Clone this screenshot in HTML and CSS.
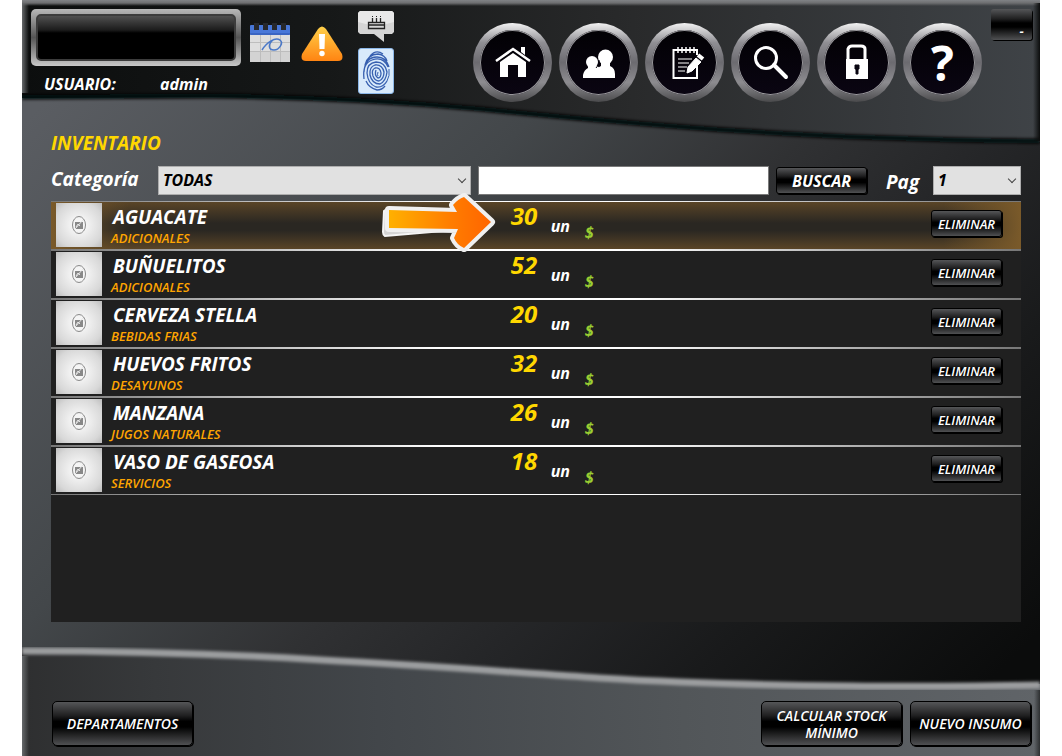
FILE: index.html
```html
<!DOCTYPE html>
<html lang="es">
<head>
  <meta charset="UTF-8">
  <meta name="viewport" content="width=device-width, initial-scale=1.0">
  <title>Inventario</title>
  <link rel="stylesheet" href="styles.css">
</head>
<body>

  <div class="app">
    <!-- Fondo con curvas -->
    <svg class="backdrop" viewBox="0 0 1018 756" preserveAspectRatio="none" aria-hidden="true">
      <defs>
        <linearGradient id="bgMid" gradientUnits="userSpaceOnUse" x1="0" y1="125" x2="762" y2="887">
          <stop offset="0" stop-color="#5a5d62"/>
          <stop offset=".33" stop-color="#43474a"/>
          <stop offset=".52" stop-color="#303133"/>
          <stop offset=".65" stop-color="#252628"/>
          <stop offset=".8" stop-color="#191a1b"/>
          <stop offset="1" stop-color="#0b0c0c"/>
        </linearGradient>
        <linearGradient id="bgTop" x1="0" y1="0" x2="1" y2="0">
          <stop offset="0" stop-color="#0c0e0e"/>
          <stop offset=".3" stop-color="#161818"/>
          <stop offset=".6" stop-color="#292a2b"/>
          <stop offset="1" stop-color="#3f4347"/>
        </linearGradient>
        <linearGradient id="bgBottom" x1="0" y1="0" x2="1" y2="0">
          <stop offset="0" stop-color="#2e2f30"/>
          <stop offset=".13" stop-color="#37393b"/>
          <stop offset=".35" stop-color="#42464a"/>
          <stop offset=".65" stop-color="#525659"/>
          <stop offset="1" stop-color="#606468"/>
        </linearGradient>
        <linearGradient id="edge" x1="0" y1="0" x2="0" y2="1">
          <stop offset="0" stop-color="#818386"/>
          <stop offset=".5" stop-color="#6d6e70"/>
          <stop offset="1" stop-color="#6d6e70" stop-opacity="0"/>
        </linearGradient>
        <linearGradient id="side" x1="0" y1="0" x2="1" y2="0">
          <stop offset="0" stop-color="#66696b"/>
          <stop offset="1" stop-color="#66696b" stop-opacity="0"/>
        </linearGradient>
        <linearGradient id="sideDark" x1="0" y1="0" x2="1" y2="0">
          <stop offset="0" stop-color="#0b0c0c" stop-opacity="0"/>
          <stop offset="1" stop-color="#0b0c0c"/>
        </linearGradient>
        <filter id="soft"><feGaussianBlur stdDeviation="1.4"/></filter>
      </defs>
      <rect width="1018" height="756" fill="url(#bgMid)"/>
      <path d="M0 0H1018V142C900 141 810 138 720 132C640 127 550 119 458 110C370 102 290 98 190 97C100 97 50 98 0 98Z" fill="url(#bgTop)"/>
      <path d="M0 97C50 97 100 96 190 96C290 97 370 101 458 109C550 118 640 126 720 131C810 137 900 140 1018 141" fill="none" stroke="#060707" stroke-width="5" filter="url(#soft)"/>
      <rect width="1018" height="6" fill="url(#edge)"/>
      <rect y="3" width="7" height="90" fill="url(#side)"/>
      <rect x="1011" y="3" width="7" height="138" fill="url(#sideDark)"/>
      <path d="M0 650C120 650 220 653 300 658C400 663 500 671 578 676C660 682 730 684 830 685C900 686 960 685 1018 684V756H0Z" fill="url(#bgBottom)"/>
      <path d="M0 651C120 651 220 655 300 660C400 665 500 673 578 678C660 683 730 685 830 686C900 687 960 686 1018 685" fill="none" stroke="#9b9d9f" stroke-width="7" filter="url(#soft)"/>
      <rect y="656" width="7" height="100" fill="url(#side)"/>
      <rect x="1012" y="690" width="6" height="66" fill="url(#sideDark)" opacity=".6"/>
    </svg>

    <header class="header">
      <div class="brand">
        <div class="logo-frame"><div class="logo-screen"></div></div>
        <p class="user"><span class="user-label">USUARIO:</span><span>admin</span></p>
      </div>

      <div class="shortcuts">
        <button class="icon-button calendar" aria-label="Calendario">
          <svg width="40" height="39" viewBox="0 0 40 39">
            <rect y="11" width="40" height="28" fill="#dedede"/>
            <path d="M0 28H40V39H0Z" fill="#cbcbcb" opacity=".6"/>
            <path d="M0 19.500H40M0 28.500H40M10.500 12V39M20.500 12V39M30.500 12V39" stroke="#bdbdbd"/>
            <rect y="2" width="40" height="10" rx="1" fill="#4877d8"/>
            <path d="M0 11H40" stroke="#2c55ae"/>
            <path d="M4 0h5v7h-5zM13 0h5v7h-5zM22 0h5v7h-5zM31 0h5v7h-5z" fill="#26282c"/>
            <path d="M12 27C17 19 25 14 30 17C34 20 29 27 24 27C18 27 18 21 23 17" fill="none" stroke="#4a78c8" stroke-width="1.500"/>
          </svg>
        </button>
        <button class="icon-button warning" aria-label="Alertas">
          <svg width="42" height="36" viewBox="0 0 42 36">
            <defs>
              <linearGradient id="warn" x1="0" y1="0" x2="0" y2="1">
                <stop offset="0" stop-color="#ffd04a"/><stop offset=".55" stop-color="#ffa62a"/><stop offset="1" stop-color="#ff8412"/>
              </linearGradient>
            </defs>
            <path d="M17 3Q21-2 25 3L41 28Q43 35 37 35H5Q-1 35 1 28Z" fill="url(#warn)"/>
            <path d="M18 8H24L23.500 23H18.500Z" fill="#fff"/><circle cx="21" cy="27.500" r="2.700" fill="#fff"/>
          </svg>
        </button>
        <div class="shortcut-stack">
          <button class="icon-button" aria-label="Cumpleaños">
            <svg width="36" height="31" viewBox="0 0 36 31">
              <path d="M2 0H34L36 2V21L34 23H26V31L16 23H2L0 21V2Z" fill="#d5d5d5"/>
              <path d="M2 0H34L36 2V11Q18 17 0 11V2Z" fill="#e8e8e8"/>
              <path d="M10.500 11.500H26.500V17.500H10.500ZM10 14H27M14.500 7V11M18.500 7V11M22.500 7V11" fill="none" stroke="#222" stroke-width="1.300"/>
              <path d="M14 5h1v1h-1zM18 5h1v1h-1zM22 5h1v1h-1z" fill="#222"/>
            </svg>
          </button>
          <button class="icon-button" aria-label="Huella">
            <svg width="36" height="46" viewBox="0 0 36 46">
              <rect x=".5" y=".5" width="35" height="45" rx="2.500" fill="#d8eafb" stroke="#8cb7e8"/>
              <g fill="none" stroke="#3760b0" stroke-width="1.300">
                <path d="M18 22Q16 27 20 30Q23 30 23 25Q22 19 17 20Q13 22 15 28Q17 33 21 33Q26 31 26 24Q24 16 17 17Q11 19 12 27Q14 36 22 36Q28 33 29 24Q27 14 18 14Q9 15 9 25Q10 36 18 39Q25 40 29 33"/>
                <path d="M6 31Q4 16 14 12Q25 8 30 19M6 24Q7 9 19 9Q28 9 31 19M7 17Q10 6 20 6Q27 7 29 13M8 33Q11 40 19 42Q24 42 27 38M12 8Q18 1 25 6"/>
                <path d="M20 24Q19 27 20 28M31 21Q32 28 29 33" stroke-width="1"/>
              </g>
            </svg>
          </button>
        </div>
      </div>

      <nav class="nav">
        <a class="nav-item" href="#" aria-label="Inicio">
          <svg viewBox="0 0 64 64" fill="#fff">
            <path d="M15 30L32 18L49 30" fill="none" stroke="#fff" stroke-width="2.500"/>
            <path d="M40 16H44V24L40 21ZM19 31L32 22L45 31V46H37V34H27V46H19Z"/>
          </svg>
        </a>
        <a class="nav-item" href="#" aria-label="Clientes">
          <svg viewBox="0 0 64 64" fill="#fff">
            <circle cx="25" cy="31" r="6"/><path d="M16 47V44Q17 39 21 37V34H29L34 38V47Z"/>
            <circle cx="38.500" cy="26" r="7.500"/><path d="M30 47V40Q31 36 34 35V31H43V35Q48 37 48 43V47Z"/>
            <path d="M29 37L32 33V29" fill="none" stroke="#080510" stroke-width="1"/>
          </svg>
        </a>
        <a class="nav-item" href="#" aria-label="Pedidos">
          <svg viewBox="0 0 64 64" fill="none" stroke="#fff">
            <path d="M44 34V47H20.500V19H44V24" stroke-width="2"/>
            <path d="M25 16V22M29 16V22M33 16V22M37 16V22M41 16V22" stroke-width="1.500"/>
            <path d="M25 28H39M25 32H36M25 36H34M25 40H32" stroke-width="1.200"/>
            <path d="M34 42L35 36L43 27L48 31L39 40Z" fill="#fff"/>
            <path d="M45 24L50 28" stroke-width="4"/>
          </svg>
        </a>
        <a class="nav-item" href="#" aria-label="Buscar">
          <svg viewBox="0 0 64 64" fill="none" stroke="#fff">
            <circle cx="27" cy="27" r="10.500" stroke-width="3"/>
            <path d="M35 34L47 46" stroke-width="4" stroke-linecap="round"/>
          </svg>
        </a>
        <a class="nav-item" href="#" aria-label="Seguridad">
          <svg viewBox="0 0 64 64">
            <path d="M23 29V18Q24 15 27 15H36Q40 15 40 18V29" fill="none" stroke="#fff" stroke-width="3"/>
            <path d="M21 28H43V48H21Z" fill="#fff"/>
            <path d="M30 34H34V38H33V43H31V38H30Z" fill="#080510" stroke="#080510"/>
          </svg>
        </a>
        <a class="nav-item nav-help" href="#" aria-label="Ayuda">?</a>
      </nav>

      <button class="button minimize" aria-label="Minimizar">-</button>
    </header>

    <main class="content">
      <h1 class="title">INVENTARIO</h1>

      <form class="filters">
        <label class="category-label" for="categoria">Categoría</label>
        <span class="select-box category-box">
          <select class="select" id="categoria"><option>TODAS</option></select>
        </span>
        <input class="search" type="text" aria-label="Buscar insumo">
        <button class="button search-button" type="button">BUSCAR</button>
        <label class="page-label" for="pagina">Pag</label>
        <span class="select-box page-box">
          <select class="select" id="pagina"><option>1</option></select>
        </span>
      </form>

      <!-- Listado de insumos -->
      <div class="list">
        <table class="items">
          <colgroup>
            <col class="col-thumb"><col class="col-name"><col class="col-qty"><col class="col-unit"><col><col class="col-action">
          </colgroup>
          <tbody>
            <tr class="item selected">
              <td><div class="thumb"><svg width="16" height="20" viewBox="0 0 16 20"><use href="#noImage"/></svg></div></td>
              <td class="name-cell"><div class="name">AGUACATE</div><div class="category">ADICIONALES</div></td>
              <td class="qty">
                30
                <svg class="pointer" width="116" height="60" viewBox="0 0 116 60" aria-hidden="true">
                  <defs>
                    <linearGradient id="arrow" x1="0" y1="0" x2="1" y2="0">
                      <stop offset="0" stop-color="#ffb000"/><stop offset=".6" stop-color="#ff7d00"/><stop offset="1" stop-color="#ff6500"/>
                    </linearGradient>
                  </defs>
                  <path d="M3 19L7 16L75 24L73 38L4 44Q2 43 2 40Z" fill="#d4d4d4" stroke="#f5f5f5" stroke-width="2"/>
                  <path d="M8 18L76 20L72 13Q77 7 83 5L110 30L83 56Q76 53 73 46L77 37L8 36Z" fill="url(#arrow)" stroke="#f0f0f0" stroke-width="8" stroke-linejoin="round"/>
                  <path d="M8 18L76 20L72 13Q77 7 83 5L110 30L83 56Q76 53 73 46L77 37L8 36Z" fill="url(#arrow)"/>
                </svg>
              </td>
              <td class="unit">un</td>
              <td class="price">$</td>
              <td><button class="button delete">ELIMINAR</button></td>
            </tr>
            <tr class="item">
              <td><div class="thumb"><svg width="16" height="20" viewBox="0 0 16 20"><use href="#noImage"/></svg></div></td>
              <td class="name-cell"><div class="name">BUÑUELITOS</div><div class="category">ADICIONALES</div></td>
              <td class="qty">52</td>
              <td class="unit">un</td>
              <td class="price">$</td>
              <td><button class="button delete">ELIMINAR</button></td>
            </tr>
            <tr class="item">
              <td><div class="thumb"><svg width="16" height="20" viewBox="0 0 16 20"><use href="#noImage"/></svg></div></td>
              <td class="name-cell"><div class="name">CERVEZA STELLA</div><div class="category">BEBIDAS FRIAS</div></td>
              <td class="qty">20</td>
              <td class="unit">un</td>
              <td class="price">$</td>
              <td><button class="button delete">ELIMINAR</button></td>
            </tr>
            <tr class="item">
              <td><div class="thumb"><svg width="16" height="20" viewBox="0 0 16 20"><use href="#noImage"/></svg></div></td>
              <td class="name-cell"><div class="name">HUEVOS FRITOS</div><div class="category">DESAYUNOS</div></td>
              <td class="qty">32</td>
              <td class="unit">un</td>
              <td class="price">$</td>
              <td><button class="button delete">ELIMINAR</button></td>
            </tr>
            <tr class="item">
              <td><div class="thumb"><svg width="16" height="20" viewBox="0 0 16 20"><use href="#noImage"/></svg></div></td>
              <td class="name-cell"><div class="name">MANZANA</div><div class="category">JUGOS NATURALES</div></td>
              <td class="qty">26</td>
              <td class="unit">un</td>
              <td class="price">$</td>
              <td><button class="button delete">ELIMINAR</button></td>
            </tr>
            <tr class="item">
              <td><div class="thumb"><svg width="16" height="20" viewBox="0 0 16 20"><use href="#noImage"/></svg></div></td>
              <td class="name-cell"><div class="name">VASO DE GASEOSA</div><div class="category">SERVICIOS</div></td>
              <td class="qty">18</td>
              <td class="unit">un</td>
              <td class="price">$</td>
              <td><button class="button delete">ELIMINAR</button></td>
            </tr>
          </tbody>
        </table>
      </div>
    </main>

    <footer class="footer">
      <button class="button action departments">DEPARTAMENTOS</button>
      <button class="button action stock">CALCULAR STOCK MÍNIMO</button>
      <button class="button action new-item">NUEVO INSUMO</button>
    </footer>
  </div>

  <!-- Icono de producto sin imagen -->
  <svg class="sprite" width="0" height="0" aria-hidden="true">
    <symbol id="noImage" viewBox="0 0 16 20">
      <ellipse cx="8" cy="10" rx="6.500" ry="8.500" fill="none" stroke="#888"/>
      <path d="M4 7H12V14H4Z" fill="#888"/>
      <path d="M4 14L12 5M5 12L7 9L9 11" fill="none" stroke="#e8e8e8"/>
    </symbol>
  </svg>

</body>
</html>
```
FILE: styles.css
```css
* {
  margin: 0;
  padding: 0;
  box-sizing: border-box;
}

body {
  font-family: 'Open Sans', 'Noto Sans', sans-serif;
  font-weight: 700;
  font-style: italic;
  color: #fff;
  background-color: #fff;
  padding: 0 22px;
}

button, input, select {
  font: inherit;
  color: inherit;
}

.app {
  position: relative;
  display: flex;
  flex-direction: column;
  min-height: 100vh;
}

.backdrop {
  position: absolute;
  inset: 0;
  width: 100%;
  height: 100%;
  z-index: -1;
}

.sprite {
  position: absolute;
}

/* Cabecera */
.header {
  display: flex;
  align-items: flex-start;
  padding: 9px 8px 0 9px;
  height: 131px;
}

.logo-frame {
  width: 210px;
  height: 57px;
  padding: 5px;
  border-radius: 5px;
  background: linear-gradient(#b8b8b8, #555 50%, #c8c8c8);
}

.logo-screen {
  height: 47px;
  border: 2px solid #3c3c3c;
  border-radius: 5px;
  background: linear-gradient(#505050, #1c1c1c 14px, #000 17px);
}

.user {
  display: flex;
  padding: 7px 0 0 13px;
  font-size: 16px;
  line-height: 22px;
}

.user-label {
  width: 116px;
}

.shortcuts {
  display: flex;
  margin-left: 9px;
}

.icon-button {
  display: block;
  border: none;
  background: none;
  cursor: pointer;
}

.icon-button svg {
  display: block;
}

.calendar {
  padding-top: 14px;
  align-self: flex-start;
}

.warning {
  padding-top: 17px;
  margin-left: 11px;
  align-self: flex-start;
}

.shortcut-stack {
  display: flex;
  flex-direction: column;
  gap: 6px;
  align-items: flex-end;
  padding-top: 2px;
  margin-left: 15px;
}

.nav {
  display: flex;
  gap: 7px;
  margin-left: auto;
  padding-top: 14px;
}

.nav-item {
  display: flex;
  align-items: center;
  justify-content: center;
  width: 79px;
  height: 79px;
  border: 7px solid transparent;
  border-radius: 50%;
  background: linear-gradient(#020104, #0a0512) padding-box,
    linear-gradient(#f2f2f2, #8f8e93 25%, #6c6b70 50%, #8d8c90 75%, #4a4a4c) border-box;
  box-shadow: inset 0 0 0 1px #99989c;
  color: #fff;
  text-decoration: none;
}

.nav-item svg {
  width: 64px;
  height: 64px;
}

.nav-help {
  font-size: 48px;
  font-style: normal;
  line-height: 64px;
}

/* Botones */
.button {
  border: 1px solid #000;
  border-radius: 3px;
  background: linear-gradient(#555658, #1f1f20 32%, #000 45%, #000 58%, #505153);
  box-shadow: 1px 1px 0 #000;
  color: #fff;
  text-align: center;
  cursor: pointer;
}

.minimize {
  width: 41px;
  height: 31px;
  margin-left: 9px;
  padding: 13px 0 0 20px;
  border-width: 0;
  font-size: 13px;
  line-height: 18px;
}

/* Contenido */
.content {
  flex: 1;
  padding: 0 19px 0 29px;
}

.title {
  font-size: 19px;
  line-height: 25px;
  color: #ffd700;
}

.filters {
  display: flex;
  height: 30px;
  margin: 10px 0 5px;
  font-size: 19px;
  line-height: 27px;
}

.category-label {
  width: 107px;
}

.select-box {
  position: relative;
}

.select-box::after {
  content: "";
  position: absolute;
  right: 6px;
  top: 10px;
  width: 5px;
  height: 5px;
  border-right: 1px solid #444;
  border-bottom: 1px solid #444;
  transform: rotate(45deg);
  pointer-events: none;
}

.category-box {
  flex: 315;
}

.page-box {
  width: 88px;
}

.select {
  appearance: none;
  width: 100%;
  height: 29px;
  padding-left: 4px;
  border: 1px solid #adadad;
  background-color: #e1e1e1;
  color: #000;
  font-size: 16px;
}

.search {
  flex: 290;
  min-width: 0;
  height: 29px;
  margin-left: 7px;
  text-indent: 6px;
  border: 1px solid #7a7a7a;
  background-color: #fff;
  color: #000;
  font-size: 16px;
}

.search-button {
  width: 91px;
  height: 27px;
  margin: 1px 0 0 7px;
  font-size: 16px;
  line-height: 24px;
}

.page-label {
  width: 47px;
  margin: 3px 0 0 19px;
}

/* Listado */
.list {
  min-height: 421px;
  background-color: #202020;
}

.items {
  width: 100%;
  table-layout: fixed;
  border-collapse: collapse;
}

.col-thumb {
  width: 56px;
}

.col-name {
  width: 41%;
}

.col-qty {
  width: 46px;
}

.col-unit {
  width: 34px;
}

.col-action {
  width: 90px;
}

.item {
  height: 49px;
  background:
    linear-gradient(90deg, #777, #fff 40%, #fff 60%, #777) top / 100% 1px no-repeat,
    linear-gradient(90deg, #777, #fff 40%, #fff 60%, #777) bottom / 100% 1px no-repeat,
    #202020;
}

.selected {
  background:
    linear-gradient(90deg, #777, #fff 40%, #fff 60%, #777) top / 100% 1px no-repeat,
    linear-gradient(90deg, #777, #fff 40%, #fff 60%, #777) bottom / 100% 1px no-repeat,
    linear-gradient(90deg, #7a5a2a, transparent 8%, transparent 92%, #7a5a2a),
    linear-gradient(#5c4627, #2a2722 45%, #2a2722 60%, #5c4627);
}

.item td {
  vertical-align: top;
}

.thumb {
  display: flex;
  align-items: center;
  justify-content: center;
  width: 46px;
  height: 44px;
  margin: 2px 0 0 5px;
  background: radial-gradient(#f5f5f5 20%, #d8d8d8 75%, #bdbdbd);
}

.name-cell {
  padding-left: 4px;
}

.name {
  padding: 4px 0 0 2px;
  font-size: 19px;
  line-height: 24px;
}

.category {
  font-size: 13px;
  line-height: 18px;
  font-weight: 600;
  color: #ffa500;
}

.item .qty {
  position: relative;
  padding-left: 6px;
  font-size: 24px;
  line-height: 30px;
  color: #ffd700;
}

.pointer {
  position: absolute;
  right: 100%;
  top: -9px;
  margin-right: 8px;
}

.item .unit {
  padding-top: 14px;
  font-size: 16px;
  line-height: 22px;
}

.item .price {
  padding-top: 20px;
  font-size: 16px;
  line-height: 22px;
  color: #9acd32;
}

.delete {
  width: 71px;
  height: 27px;
  margin-top: 9px;
  font-size: 13px;
  line-height: 24px;
  font-weight: 600;
}

/* Pie */
.footer {
  display: flex;
  justify-content: flex-end;
  gap: 8px;
  padding: 0 9px 10px 30px;
}

.action {
  height: 45px;
  border-radius: 5px;
  font-size: 14px;
  line-height: 17px;
  font-weight: 600;
}

.departments {
  width: 141px;
  margin-right: auto;
}

.stock {
  width: 141px;
  padding: 0 8px;
}

.new-item {
  width: 121px;
}
```
